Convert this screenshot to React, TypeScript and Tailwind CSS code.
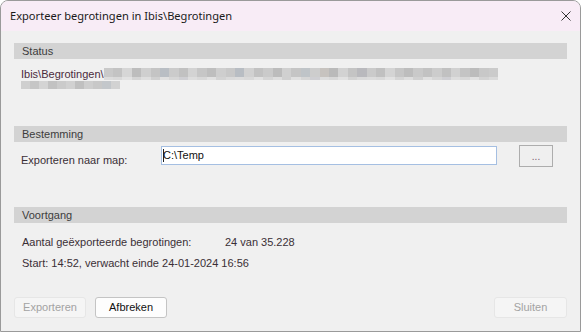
import React from 'react';

// Pixelated (blurred) path fragments, a few grey tones
const topRow = ['#c9c9c9','#c3c3c3','#d6d6d6','#bdbdbd','#cfcfcf','#c4c4c4','#b9bec4','#cbcbcb','#c1c1c1','#d3d3d3','#c6c6c6','#bebebe','#cecece','#c8c8c8','#b8bdc3','#d1d1d1','#c2c2c2','#cacaca','#bcbcbc','#d0d0d0','#c5c5c5','#bfc4c8','#cdcdcd','#c7c3bf','#bababa','#d2d2d2','#c4c4c4','#b9b9bd','#cacaca','#c0c0c0','#d4d4d4','#c6c6c6','#bdbdbd','#c9c9c9','#c2c2c2','#cccccc','#c1c1c1','#d1d1d1','#c4c4c4','#bcbcbc','#c8c8c8','#cbcbcb'];
const bottomRow = ['#dcdcdc','#d9d9d9','#e2e2e2','#d5d5d5','#dedede','#d0d0d0','#e0e0e0','#d6d6d6','#cfcfd3','#dddddd','#d8d8d8','#e1e1e1','#d3d3d3','#dadada'];
const line2 = ['#cfcfcf','#c6c6c6','#d4d4d4','#c2c2c2','#cbcbcb','#d1d1d1','#c0c0c0','#cecece','#c8c8c8','#c3c7cb','#d2d2d2'];

function Mosaic({ colors, cell, height }: { colors: string[]; cell: number; height: number }) {
  return (
    <div className="flex">
      {colors.map((c, i) => (
        <div key={i} style={{ width: cell, height, backgroundColor: c }} />
      ))}
    </div>
  );
}

function SectionHeader({ title }: { title: string }) {
  return (
    <div className="h-[16px] bg-[#d3d3d3] pl-[8px] flex items-center text-[#3c3c3c]">{title}</div>
  );
}

function DialogButton({ label, disabled, className }: { label: string; disabled?: boolean; className?: string }) {
  return (
    <div
      className={`h-[21px] rounded-[3px] border flex items-center justify-center text-[11px] ${
        disabled ? 'border-[#e6e6e6] bg-[#f5f5f5] text-[#a3a3a3]' : 'border-[#c4c4c4] bg-[#fdfdfd] text-[#111]'
      } ${className ?? ''}`}
    >
      {label}
    </div>
  );
}

export default function App() {
  return (
    <div
      className="w-[581px] h-[332px] border border-[#9a9a9a] rounded-t-[8px] overflow-hidden flex flex-col bg-[#f0f0f0] text-[11px] text-[#222]"
      style={{ fontFamily: '"Liberation Sans", Arial, sans-serif' }}
    >
      {/* Title bar */}
      <div className="h-[30px] bg-[#f8ecf6] flex items-center justify-between pl-[9px] pr-[9px] shrink-0">
        <span className="text-[11.1px] text-[#1a1a1a]" style={{ fontFamily: '"Noto Sans", "Open Sans", sans-serif' }}>
          Exporteer begrotingen in Ibis\Begrotingen
        </span>
        <svg width="10" height="10" viewBox="0 0 10 10" className="text-[#333]">
          <path d="M0.5 0.5 L9.5 9.5 M9.5 0.5 L0.5 9.5" stroke="currentColor" strokeWidth="1" />
        </svg>
      </div>

      {/* Body */}
      <div className="flex-1 flex flex-col px-[13px] pt-[12px]">
        <SectionHeader title="Status" />
        <div className="pl-[7px] pt-[9px] h-[67px]">
          <div className="flex items-start">
            <span className="text-[#4a2b3d] leading-[12px]">Ibis\Begrotingen\</span>
            <div className="flex flex-col">
              <Mosaic colors={topRow} cell={9.4} height={9} />
              <Mosaic colors={bottomRow.concat(bottomRow).concat(bottomRow).slice(0, 42)} cell={9.4} height={3} />
            </div>
          </div>
          <div className="pt-[1px]">
            <Mosaic colors={line2} cell={9} height={8} />
          </div>
        </div>

        <SectionHeader title="Bestemming" />
        <div className="h-[65px] flex items-start pt-[4px]">
          <span className="pl-[7px] w-[147px] pt-[6px] text-[#3a2f36]">Exporteren naar map:</span>
          <div className="w-[336px] h-[19px] bg-white border border-[#a5bfe2] flex items-center pl-[1px] text-[#111]">
            <span className="w-px h-[13px] bg-[#222] mr-[-1px]" />
            C:\Temp
          </div>
          <div className="ml-[22px] -mt-[1px] w-[34px] h-[22px] border border-[#adadad] bg-[#efefef] flex items-center justify-center text-[#7b5a6e] text-[10px]">
            ...
          </div>
        </div>

        <SectionHeader title="Voortgang" />
        <div className="pl-[8px] pt-[11px] text-[#3a2f36]">
          <div className="flex">
            <span className="w-[203px]">Aantal geëxporteerde begrotingen:</span>
            <span>24 van 35.228</span>
          </div>
          <div className="mt-[4px]">Start: 14:52, verwacht einde 24-01-2024 16:56</div>
        </div>

        {/* Buttons */}
        <div className="mt-auto mb-[13px] flex items-center">
          <DialogButton label="Exporteren" disabled className="w-[72px]" />
          <DialogButton label="Afbreken" className="ml-[9px] w-[72px]" />
          <DialogButton label="Sluiten" disabled className="ml-auto w-[73px]" />
        </div>
      </div>
    </div>
  );
}
